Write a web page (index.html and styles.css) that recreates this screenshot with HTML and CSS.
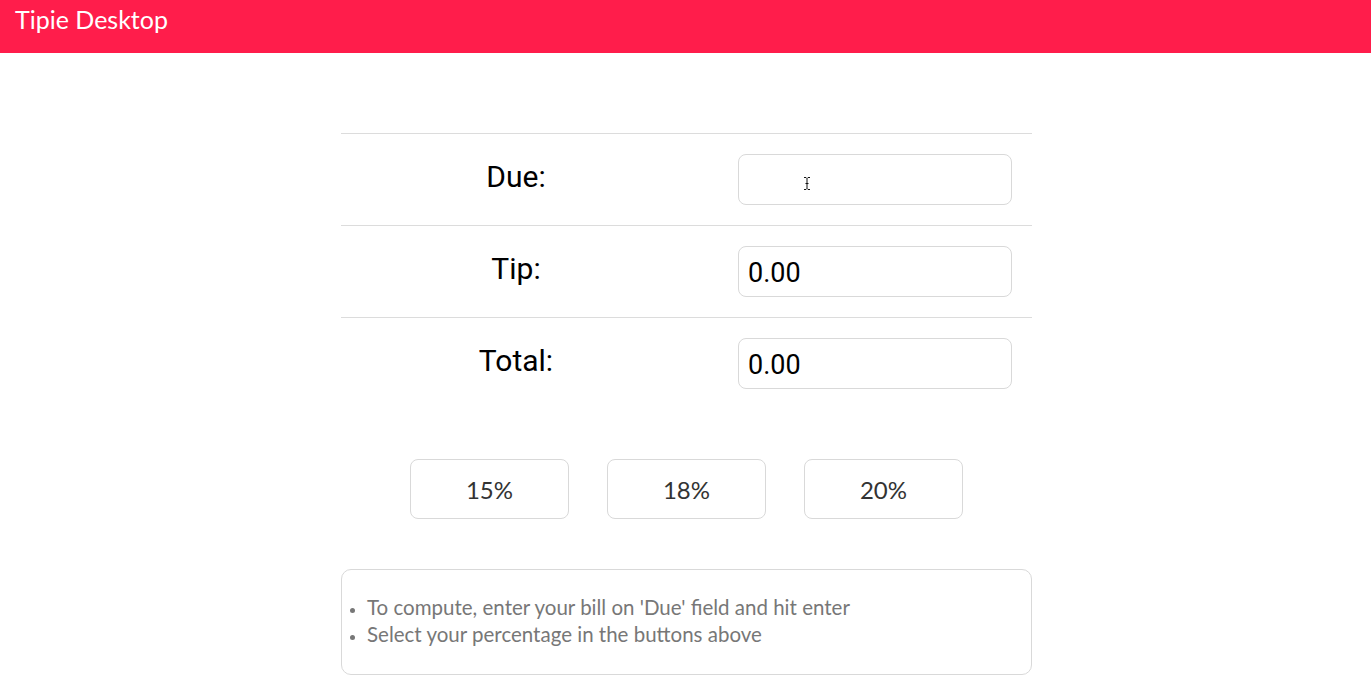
FILE: index.html
```html
<!DOCTYPE html>
<html>
<head>
<meta charset="utf-8">
<title>Tipie Desktop</title>
<link rel="stylesheet" href="styles.css">
</head>
<body>
<header class="topbar"><span class="brand">Tipie Desktop</span></header>
<main class="calc">
  <div class="fields">
    <div class="row">
      <div class="label">Due:</div>
      <div class="control">
        <div class="input-wrap">
          <input class="field" type="text" value="">
          <svg class="ibeam" width="8" height="15" viewBox="0 0 8 15"><path d="M1 1.5h2l1 1 1-1h2M4 2.5v10M1 13.5h2l1-1 1 1h2M2.5 7.5h3" fill="none" stroke="#111" stroke-width="1"/></svg>
        </div>
      </div>
    </div>
    <div class="row">
      <div class="label">Tip:</div>
      <div class="control"><input class="field" type="text" value="0.00"></div>
    </div>
    <div class="row">
      <div class="label">Total:</div>
      <div class="control"><input class="field" type="text" value="0.00"></div>
    </div>
  </div>
  <div class="buttons">
    <button class="pct">15%</button>
    <button class="pct">18%</button>
    <button class="pct">20%</button>
  </div>
  <div class="info">
    <ul>
      <li>To compute, enter your bill on 'Due' field and hit enter</li>
      <li>Select your percentage in the buttons above</li>
    </ul>
  </div>
</main>
</body>
</html>
```

FILE: styles.css
```css
html, body {
  margin: 0;
  padding: 0;
  background: #ffffff;
}
body {
  font-family: Lato, "Liberation Sans", sans-serif;
}
.topbar {
  height: 53px;
  background: #ff1d4b;
  box-sizing: border-box;
  padding: 4px 0 0 15px;
}
.brand {
  color: #ffffff;
  font-family: Lato, sans-serif;
  font-size: 25px;
  line-height: 30px;
}
.calc {
  width: 691px;
  margin: 80px auto 0 341px;
}
.fields {
  display: flex;
  flex-direction: column;
}
.row {
  display: flex;
  align-items: center;
  border-top: 1px solid #dcdcdc;
  padding: 20px 0;
  height: 51px;
}
.label {
  width: 350px;
  text-align: center;
  font-family: Roboto, "Liberation Sans", sans-serif;
  font-size: 30px;
  color: #000;
  margin-top: -6px;
}
.control {
  padding-left: 47px;
}
.input-wrap {
  position: relative;
}
.field {
  display: block;
  box-sizing: border-box;
  width: 274px;
  height: 51px;
  border: 1px solid #d9d9d9;
  border-radius: 8px;
  padding: 2px 9px 0;
  font-family: Roboto, "Liberation Sans", sans-serif;
  font-size: 27px;
  color: #000;
  background: #fff;
  outline: none;
}
.ibeam {
  position: absolute;
  left: 65px;
  top: 22px;
}
.buttons {
  display: flex;
  justify-content: center;
  gap: 38px;
  margin-top: 50px;
}
.pct {
  width: 159px;
  height: 60px;
  background: #fff;
  border: 1px solid #d9d9d9;
  border-radius: 8px;
  font-family: Lato, sans-serif;
  font-size: 24px;
  color: #333;
  padding: 0;
}
.info {
  margin-top: 50px;
  height: 106px;
  box-sizing: border-box;
  border: 1px solid #d9d9d9;
  border-radius: 10px;
  padding: 24px 0 0 0;
}
.info ul {
  margin: 0;
  padding: 0 0 0 25px;
  font-family: Lato, sans-serif;
  font-size: 20.5px;
  line-height: 27px;
  color: #777;
}
.info li::marker {
  font-size: 16px;
}
```
